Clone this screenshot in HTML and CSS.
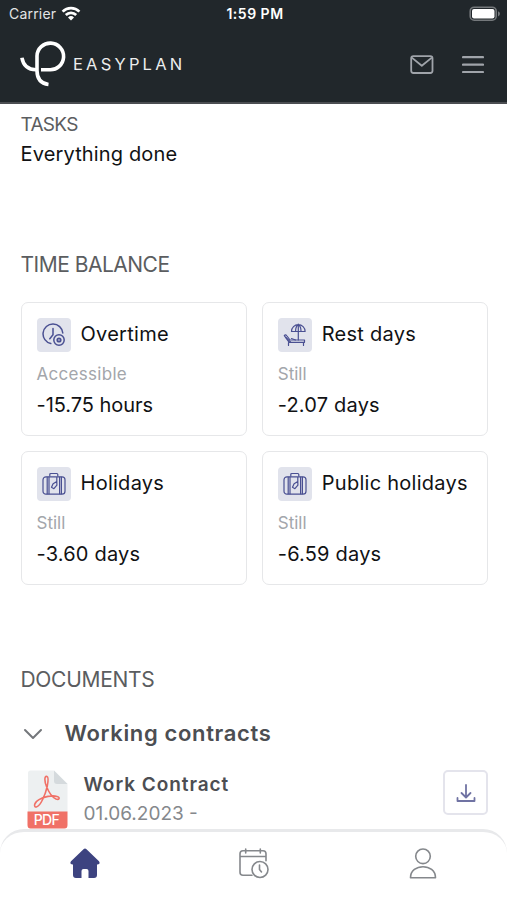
FILE: index.html
```html
<!DOCTYPE html>
<html lang="en">
<head>
  <meta charset="UTF-8">
  <title>Easyplan</title>
  <meta name="viewport" content="width=device-width, initial-scale=1.0">
  <link rel="stylesheet" href="styles.css">
</head>
<body>

  <header class="header">
    <div class="status">
      <div class="carrier">
        <span>Carrier</span>
        <svg width="20" height="15" viewBox="0 0 20 15" fill="none" stroke="#fff" stroke-width="2.7">
          <path d="M1.6 5.6a12 12 0 0 1 16.8 0"/>
          <path d="M4.8 9a7.4 7.4 0 0 1 10.4 0"/>
          <path d="M10 14.4 7 11.4a4.3 4.3 0 0 1 6 0z" fill="#fff" stroke="none"/>
        </svg>
      </div>
      <div class="clock">1:59 PM</div>
      <svg class="battery" width="32" height="16" viewBox="0 0 32 16">
        <rect x="1.2" y="1.2" width="26" height="13" rx="4" fill="none" stroke="#74787b" stroke-width="1.6"/>
        <rect x="3" y="3" width="22.5" height="9.5" rx="2" fill="#fff"/>
        <path d="M29 5.2q2 .8 2 2.6t-2 2.6z" fill="#74787b"/>
      </svg>
    </div>
    <div class="bar">
      <a class="brand" href="#">
        <svg width="46" height="48" viewBox="0 0 46 48" fill="none" stroke="#fff" stroke-width="3.6">
          <path d="M1.9 16.7C3.2 24 8 28.7 16 28.7"/>
          <path d="M21 28.700h8.500A13.300 13.300 0 1 0 17 15v14.500C17 37.500 20.500 42.500 28.500 43.500"/>
        </svg>
        <span>EASYPLAN</span>
      </a>
      <div class="actions">
        <svg width="24" height="20" viewBox="0 0 24 20" fill="none" stroke="#a0a4aa" stroke-width="1.8" stroke-linejoin="round">
          <rect x="1.2" y="1.2" width="21.3" height="16.8" rx="2.2"/>
          <path d="m1.8 2.600 10 8.200 10-8.200"/>
        </svg>
        <svg width="22" height="20" viewBox="0 0 22 20" stroke="#a0a4aa" stroke-width="2.2" stroke-linecap="round">
          <path d="M1 2.200h20M1 9.600h20M1 17h20"/>
        </svg>
      </div>
    </div>
  </header>

  <main class="content">
    <section class="tasks">
      <h2 class="tasks-title">TASKS</h2>
      <p class="done">Everything done</p>
    </section>

    <section class="balance">
      <h2>TIME BALANCE</h2>
      <div class="cards">
        <div class="card">
          <div class="card-head">
            <span class="icon">
              <svg width="24" height="24" viewBox="0 0 24 24" fill="none" stroke="#4a5092" stroke-width="1.5" stroke-linecap="round">
                <path d="M8.800 20.600A9.900 9.900 0 1 1 20.800 10"/>
                <path d="M11 5.500v6.300l-3.200 4"/>
                <circle cx="17" cy="17" r="5.2"/>
                <circle cx="17" cy="17" r="1.700" stroke-width="1.800"/>
              </svg>
            </span>
            <h3>Overtime</h3>
          </div>
          <p class="label accessible">Accessible</p>
          <p class="value hours">-15.75 hours</p>
        </div>

        <div class="card">
          <div class="card-head">
            <span class="icon">
              <svg width="24" height="24" viewBox="0 0 24 24" fill="none" stroke="#4a5092" stroke-width="1.2" stroke-linejoin="round" stroke-linecap="round">
                <path d="M8.500 8.500a6.800 6.800 0 0 1 13.600 0zM12.600 8.300q0-5 2.700-6.500 2.700 1.500 2.700 6.500M15.300 1v16"/>
                <path d="M1.300 12.700c.8-1.200 1.900-.9 2.700.3l3 4h14.500v2.300H6.200z"/>
                <path d="m3 14.500 4.500 4.500M5.500 19.500v3M20.500 19.500v3M8.500 15.500l4 1.500"/>
              </svg>
            </span>
            <h3>Rest days</h3>
          </div>
          <p class="label">Still</p>
          <p class="value">-2.07 days</p>
        </div>

        <div class="card">
          <div class="card-head">
            <span class="icon">
              <svg width="24" height="24" viewBox="0 0 24 24" fill="none" stroke="#4a5092" stroke-width="1.2" stroke-linejoin="round">
                <rect x="1" y="4.800" width="22" height="17.400" rx="3"/>
                <path d="M5.200 4.800v17.400M7 4.800v17.400M17.600 4.800v17.400M19.400 4.800v17.400M7.800 4.600V2.500q0-1 1-1h6q1 0 1 1v2.100"/>
                <path d="M14.800 5v4.500M14.800 9.500l-3.700 2.300-1.600 3.500 2.400 1.400 3-3.500z"/>
              </svg>
            </span>
            <h3>Holidays</h3>
          </div>
          <p class="label">Still</p>
          <p class="value">-3.60 days</p>
        </div>

        <div class="card">
          <div class="card-head">
            <span class="icon">
              <svg width="24" height="24" viewBox="0 0 24 24" fill="none" stroke="#4a5092" stroke-width="1.2" stroke-linejoin="round">
                <rect x="1" y="4.800" width="22" height="17.400" rx="3"/>
                <path d="M5.200 4.800v17.400M7 4.800v17.400M17.600 4.800v17.400M19.400 4.800v17.400M7.800 4.600V2.500q0-1 1-1h6q1 0 1 1v2.100"/>
                <path d="M14.800 5v4.500M14.800 9.500l-3.700 2.300-1.600 3.500 2.400 1.400 3-3.500z"/>
              </svg>
            </span>
            <h3>Public holidays</h3>
          </div>
          <p class="label">Still</p>
          <p class="value">-6.59 days</p>
        </div>
      </div>
    </section>

    <section class="documents">
      <h2>DOCUMENTS</h2>
      <div class="group">
        <svg width="20" height="12" viewBox="0 0 20 12" fill="none" stroke="#74777b" stroke-width="2" stroke-linecap="round" stroke-linejoin="round">
          <path d="m2 2 8 8 8-8"/>
        </svg>
        <h3>Working contracts</h3>
      </div>
      <div class="document">
        <svg class="pdf" width="41" height="59" viewBox="0 0 41 59">
          <path d="M1 3q0-2.500 2.500-2.500H27L40.500 14v28H1z" fill="#edf0f1"/>
          <path d="M27 .5 40.500 14H30q-3 0-3-3z" fill="#d5dadd"/>
          <path d="M.5 41.500h40V55q0 3.500-3 3.500h-34q-3 0-3-3.500z" fill="#f07167"/>
          <path d="M20 6.500c-3-1-2.500 5-.5 10 2 5 6 11 9.500 12.500 3 1.200 4.800-1.500 1-2.600-5-1.400-13 .3-18 3.200-5.500 3.200-5.300 7.800-2.600 7.400 4.500-1 9.200-13.500 10.800-20.500 1-5 1.100-9.500-.2-10z" fill="none" stroke="#f07167" stroke-width="1.6"/>
          <text class="pdf-text" x="19.5" y="55" text-anchor="middle">PDF</text>
        </svg>
        <div class="document-text">
          <h4>Work Contract</h4>
          <p>01.06.2023 -</p>
        </div>
        <button class="download" type="button" aria-label="Download">
          <svg width="20" height="20" viewBox="0 0 20 20" fill="none" stroke="#7073a3" stroke-width="1.8" stroke-linejoin="round" stroke-linecap="round">
            <path d="M10 2v12M5.500 10l4.500 4.500 4.500-4.500M1.500 15v3h17V15"/>
          </svg>
        </button>
      </div>
    </section>
  </main>

  <nav class="tabs">
    <a href="#" aria-label="Home">
      <svg width="30" height="31" viewBox="0 0 30 31">
        <path d="M13.500 1.200q1.500-1.200 3 0L29 13.300q1.800 2.700-1.500 3.200H27V27q0 3-3 3h-5.500v-7q0-2-2-2h-3q-2 0-2 2v7H6q-3 0-3-3V16.500h-.5Q-.8 16 1 13.300z" fill="#3d4380"/>
      </svg>
    </a>
    <a href="#" aria-label="Calendar">
      <svg width="30" height="31" viewBox="0 0 30 31" fill="none" stroke="#85888c" stroke-width="1.6" stroke-linecap="round">
        <path d="M13 27.200H4q-3 0-3-3V5.800q0-3 3-3h20q3 0 3 3v7M1 8.500h26M6.700 1v4M21.300 1v4"/>
        <circle cx="21" cy="21.500" r="8"/>
        <path d="M20.500 17v4.500l2 2.500"/>
      </svg>
    </a>
    <a href="#" aria-label="Profile">
      <svg width="28" height="31" viewBox="0 0 28 31" fill="none" stroke="#85888c" stroke-width="1.6" stroke-linejoin="round">
        <circle cx="14" cy="8.300" r="7.300"/>
        <path d="M1.500 29.800C1.500 15 26.500 15 26.500 29.800z"/>
      </svg>
    </a>
  </nav>

</body>
</html>
```
FILE: styles.css
```css
* {
  box-sizing: border-box;
}

body {
  margin: 0;
  height: 900px;
  display: flex;
  flex-direction: column;
  overflow: hidden;
  background-color: #fff;
  color: #111214;
  font-family: Inter, "Open Sans", sans-serif;
}

h2, h3, h4, p {
  margin: 0;
  font-weight: 400;
  white-space: nowrap;
}

svg {
  display: block;
  flex: none;
}

.header {
  flex: none;
  height: 104px;
  background-color: #21272b;
  border-bottom: 2px solid #4b4e52;
  color: #fff;
}

.status {
  display: grid;
  grid-template-columns: 1fr auto 1fr;
  align-items: center;
  height: 27px;
  padding: 0 6px 0 9px;
}

.carrier {
  display: flex;
  align-items: center;
  gap: 5px;
  font-size: 14px;
  letter-spacing: 0.2px;
  color: #e3e4e5;
}

.clock {
  font-size: 14px;
  font-weight: 600;
  letter-spacing: 0.5px;
}

.battery {
  justify-self: end;
}

.bar {
  display: flex;
  align-items: center;
  justify-content: space-between;
  height: 75px;
  padding: 0 23px 0 20px;
}

.brand {
  display: flex;
  align-items: center;
  gap: 7px;
  color: #eceded;
  text-decoration: none;
  font-size: 16.5px;
  letter-spacing: 3.2px;
}

.brand span {
  padding-bottom: 1px;
}

.actions {
  display: flex;
  align-items: center;
  gap: 28px;
}

.content {
  flex: 1;
  min-height: 0;
  padding: 7px 19px 0 20.5px;
}

h2 {
  font-size: 21px;
  line-height: 32px;
  letter-spacing: -0.5px;
  color: #5b5d60;
}

.tasks .tasks-title {
  font-size: 19px;
  line-height: 28px;
  letter-spacing: -0.7px;
}

.done {
  font-size: 20px;
  line-height: 30px;
  letter-spacing: 0.15px;
}

.balance {
  margin-top: 80px;
}

.cards {
  display: grid;
  grid-template-columns: 1fr 1fr;
  gap: 15px;
  margin-top: 21px;
}

.card {
  height: 134px;
  padding: 15px;
  border: 1px solid #e6e7e9;
  border-radius: 7px;
}

.card-head {
  display: flex;
  align-items: center;
  gap: 10px;
}

.card h3 {
  height: 34px;
  font-size: 20px;
  line-height: 32px;
  letter-spacing: 0.27px;
}

.icon {
  display: flex;
  align-items: center;
  justify-content: center;
  width: 34px;
  height: 34px;
  border-radius: 4px;
  background-color: #e1e3ec;
}

.label {
  margin-top: 10px;
  font-size: 17px;
  line-height: 24px;
  color: #a3a6ab;
}

.accessible {
  letter-spacing: 0.3px;
}

.value {
  margin-top: 5px;
  font-size: 20px;
  line-height: 28px;
  letter-spacing: 0.2px;
}

.hours {
  letter-spacing: -0.05px;
}

.documents {
  margin-top: 79px;
}

.documents h2 {
  letter-spacing: -0.3px;
}

.group {
  display: flex;
  align-items: center;
  gap: 22px;
  margin-top: 22px;
  padding-left: 2px;
}

.group h3 {
  font-size: 22px;
  line-height: 31px;
  font-weight: 600;
  letter-spacing: 0.65px;
  color: #4c4e52;
}

.document {
  display: flex;
  align-items: flex-start;
  margin-top: 21px;
  padding-left: 6px;
}

.pdf-text {
  fill: #fff;
  font-size: 14px;
  font-weight: 500;
  letter-spacing: -0.6px;
}

.document-text {
  flex: 1;
  padding-left: 16px;
}

.document-text h4 {
  font-size: 19px;
  line-height: 29px;
  font-weight: 600;
  letter-spacing: 0.95px;
  color: #4c4e52;
}

.document-text p {
  font-size: 19px;
  line-height: 30px;
  color: #85888c;
}

.download {
  display: flex;
  align-items: center;
  justify-content: center;
  width: 45px;
  height: 45px;
  padding: 0;
  border: 2px solid #e4e4ec;
  border-radius: 5px;
  background-color: #fff;
}

.tabs {
  flex: none;
  display: grid;
  grid-template-columns: repeat(3, 1fr);
  justify-items: center;
  height: 71px;
  padding-top: 16px;
  border-top: 3px solid #e8e9eb;
  border-radius: 24px 24px 0 0;
  background-color: #fff;
}
```
